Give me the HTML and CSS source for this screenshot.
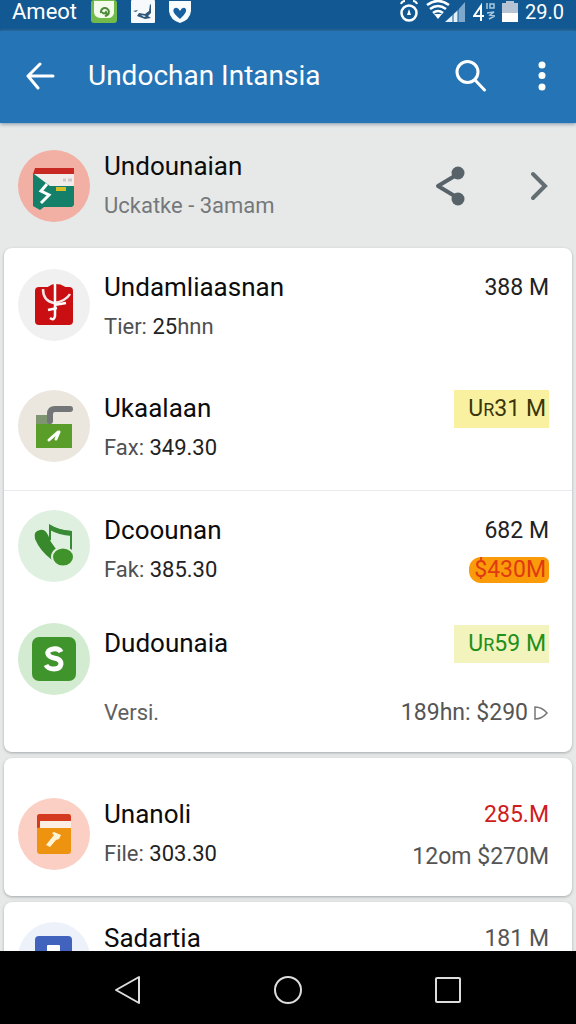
FILE: index.html
```html
<!DOCTYPE html>
<html lang="en">
<head>
<meta charset="utf-8">
<meta name="viewport" content="width=device-width, initial-scale=1">
<title>Undochan Intansia</title>
<link rel="stylesheet" href="styles.css">
</head>
<body>
<div class="status">
  <span class="carrier">Ameot</span>
  <svg width="26" height="24" viewBox="0 0 26 24"><rect width="26" height="23" rx="3" fill="#72bb4b"/><path d="M3 1h20v12q-1 5-6 5H9q-6-1-6-6z" fill="#f4fbea"/><path d="M10 13a4 4 0 1 1 4 3q3-1 1-4-2 3-4 0" fill="none" stroke="#4d8a3a" stroke-width="2"/></svg>
  <svg width="24" height="24" viewBox="0 0 24 24"><rect width="24" height="23" rx="1" fill="#f6fafc"/><path d="M2 11l5-1-2 2zM8 13l6 1 4-3 1-7 1 1v8l-3 3 3 2-6 1-8-3z" fill="#315779"/><path d="M10 15l5 1-2 1z" fill="#fff"/></svg>
  <svg width="22" height="24" viewBox="0 0 22 24"><path d="M0 1h22v10q-1 9-11 12Q1 20 0 11z" fill="#f8fcff"/><path d="M11 19Q1 11 6 8q3-1 5 3 2-4 5-3 4 3-5 11z" fill="#175f9f"/></svg>
  <div class="system">
    <svg width="20" height="24" viewBox="0 0 20 24" fill="none" stroke="#fff"><circle cx="10" cy="13" r="7.500" stroke-width="2.500"/><path d="M2 4q1-3 4-3M18 4q-1-3-4-3" stroke-width="2"/><path d="M10 9l2 6H8z" fill="#fff" stroke="none"/></svg>
    <svg class="signal" width="40" height="24" viewBox="0 0 40 24"><g fill="none" stroke="#fff" stroke-width="2.600"><path d="M1 5q11-8 22 0M4 9q8-6 16 0M7 13q5-4 10 0"/></g><path d="M8 14h8l-4 5z" fill="#fff"/><path d="M19 22l13-12v12z" fill="#e3f0fa"/><path d="M32 10l7-8v20h-7z" fill="#7fa8cd"/><path d="M27 14v8M32 9v13" stroke="#175c99"/></svg>
    <svg width="22" height="24" viewBox="0 0 22 24" fill="none" stroke="#fff"><path d="M8 21V6L1 16h10" stroke-width="2"/><path d="M14 3v6M17 4h4v4h-4zM14 13l7-1-4 3 5 1-6 3" stroke="#a7c7e0" stroke-width="1.500"/></svg>
    <svg width="16" height="24" viewBox="0 0 16 24"><path d="M0 3h4V1h8v2h4v10H0z" fill="#b6c3d5"/><path d="M0 13h16v9H0z" fill="#fff"/></svg>
    <span class="clock">29.0</span>
  </div>
</div>

<header class="appbar">
  <button class="icon-btn" aria-label="Back"><svg width="30" height="30" viewBox="0 0 30 30" fill="none" stroke="#fff" stroke-width="3" stroke-linecap="round" stroke-linejoin="round"><path d="M27 15H2M14 3L2 15l10 12"/></svg></button>
  <h1>Undochan Intansia</h1>
  <button class="icon-btn search" aria-label="Search"><svg width="32" height="32" viewBox="0 0 32 32" fill="none" stroke="#fff" stroke-width="3" stroke-linecap="round"><circle cx="12.500" cy="12" r="10.500"/><path d="M20 20l9.500 10"/></svg></button>
  <button class="icon-btn" aria-label="More"><svg width="8" height="30" viewBox="0 0 8 30" fill="#fff"><circle cx="4" cy="4" r="3.500"/><circle cx="4" cy="14.500" r="3.500"/><circle cx="4" cy="26" r="3.500"/></svg></button>
</header>

<main>
  <section class="profile">
    <svg class="avatar" viewBox="0 0 72 72"><circle cx="36" cy="36" r="36" fill="#f1b0a3"/><path d="M15 24l5-1h36v32l-2 2H26l-4 3-7-4z" fill="#14806a"/><path d="M17 18h39v6H15z" fill="#c82a23"/><path d="M16 24h40v12H32z" fill="#f0ecea"/><path d="M45 30h3M50 30h4" stroke="#cfc6c6" stroke-width="3"/><path d="M38 39h10" stroke="#d9bf27" stroke-width="4"/><path d="M29 34l-6 7 8 4-8 8" fill="none" stroke="#fff" stroke-width="3"/></svg>
    <div class="text">
      <h2 class="name">Undounaian</h2>
      <p class="sub grey">Uckatke - 3amam</p>
    </div>
    <button class="icon-btn share" aria-label="Share"><svg width="32" height="40" viewBox="0 0 32 40" fill="#576269"><path d="M24 8L4 20l20 12" fill="none" stroke="#576269" stroke-width="4" stroke-linejoin="round"/><circle cx="24" cy="7" r="6.500"/><circle cx="24" cy="33" r="6.500"/></svg></button>
    <button class="icon-btn" aria-label="Open"><svg width="18" height="30" viewBox="0 0 18 30" fill="none" stroke="#626e72" stroke-width="4" stroke-linecap="round"><path d="M3 3l12 12L3 27"/></svg></button>
  </section>

  <section class="card">
    <article class="row">
      <svg class="avatar" viewBox="0 0 72 72"><circle cx="36" cy="36" r="36" fill="#f0f0f0"/><rect x="17" y="18" width="38" height="38" rx="4" fill="#c90f12"/><path d="M28 24q1-9 10-9 10 0 12 9l-8 9-10-1z" fill="#c90f12"/><path d="M25 20q0 12 11 14 12-2 16-9" fill="none" stroke="#f4e9e9" stroke-width="2.500"/><path d="M37 15v32q-1 5-5 2M30 41l9-2M36 36l12-2" fill="none" stroke="#fff" stroke-width="2.500"/></svg>
      <div class="text"><h2 class="name">Undamliaasnan</h2><p class="sub">Tier: <span class="dark">25</span>hnn</p></div>
      <div class="amounts"><span class="amount dark">388 M</span></div>
    </article>
    <article class="row">
      <svg class="avatar" viewBox="0 0 72 72"><circle cx="36" cy="36" r="36" fill="#ebe7de"/><path d="M18 25h15v10H18z" fill="#7f9471"/><path d="M18 34h36v24H18z" fill="#5a9d29"/><path d="M32 31V24q0-5 5-5h15" fill="none" stroke="#747577" stroke-width="6" stroke-linecap="round" stroke-linejoin="round"/><path d="M31 50l9-8M41 42l-3 7" fill="none" stroke="#fff" stroke-width="3" stroke-linecap="round"/></svg>
      <div class="text"><h2 class="name">Ukaalaan</h2><p class="sub">Fax: <span class="dark">349.30</span></p></div>
      <div class="amounts"><span class="tag">U<span class="cap">R</span>31 M</span></div>
    </article>
    <hr>
    <article class="row short">
      <svg class="avatar" viewBox="0 0 72 72"><circle cx="36" cy="36" r="36" fill="#dff0e1"/><path d="M32 30V16q8 5 21 6v20" fill="none" stroke="#398a34" stroke-width="2"/><path d="M31 14q9 6 23 7v5q-14-1-22-6z" fill="#398a34"/><path d="M17 29q-2-8 5-9 5-1 8 5l3 7 5 7q-4 4-4 11-12-9-17-21z" fill="#38892b"/><ellipse cx="45" cy="47" rx="11" ry="9.500" fill="#40922b" stroke="#dff0e1" stroke-width="2"/></svg>
      <div class="text"><h2 class="name">Dcoounan</h2><p class="sub">Fak: <span class="dark">385.30</span></p></div>
      <div class="amounts"><span class="amount dark">682 M</span><span class="pill">$430M</span></div>
    </article>
    <article class="row service">
      <svg class="avatar" viewBox="0 0 72 72"><circle cx="36" cy="36" r="36" fill="#d3ebd0"/><rect x="14" y="14" width="44" height="44" rx="7" fill="#3f942c"/><path d="M43 29q-2-4-8-3-6 1-5 5 1 3 6 4 7 1 7 6-1 5-7 5-6 0-8-4" fill="none" stroke="#fff" stroke-width="5"/></svg>
      <div class="text"><h2 class="name">Dudounaia</h2></div>
      <div class="amounts"><span class="tag green">U<span class="cap">R</span>59 M</span></div>
    </article>
    <div class="version">
      <span>Versi.</span>
      <span class="amount">189hn: $290 <svg width="16" height="16" viewBox="0 0 16 16" fill="none" stroke="#777" stroke-width="1.500"><path d="M2 2q7 0 12 6-5 6-12 6z"/></svg></span>
    </div>
  </section>

  <section class="card file">
    <article class="row">
      <svg class="avatar" viewBox="0 0 72 72"><circle cx="36" cy="36" r="36" fill="#fbcfc3"/><rect x="19" y="16" width="34" height="40" rx="3" fill="#ee930f"/><path d="M19 30V19q0-3 3-3h28q3 0 3 3v5z" fill="#d33a20"/><path d="M22 23h31v7H22z" fill="#fdeee4"/><path d="M28 47l8-10-2-2 2-1 7 3-2 4-3 1-6 7z" fill="#fff3d5"/></svg>
      <div class="text"><h2 class="name">Unanoli</h2><p class="sub">File: <span class="dark">303.30</span></p></div>
      <div class="amounts"><span class="amount red">285.M</span><span class="amount">12om $270M</span></div>
    </article>
  </section>

  <section class="card last">
    <article class="row">
      <svg class="avatar" viewBox="0 0 72 72"><circle cx="36" cy="36" r="36" fill="#edf2fa"/><rect x="17" y="14" width="37" height="42" rx="4" fill="#4263bd"/><rect x="29" y="23" width="13" height="16" rx="1" fill="#fff"/></svg>
      <div class="text"><h2 class="name">Sadartia</h2></div>
      <div class="amounts"><span class="amount">181 M</span></div>
    </article>
  </section>
</main>

<nav class="navbar">
  <button class="icon-btn" aria-label="Navigate back"><svg width="28" height="32" viewBox="0 0 28 32" fill="none" stroke="#ddd" stroke-width="2" stroke-linejoin="round"><path d="M25 3v26L2 16z"/></svg></button>
  <button class="icon-btn" aria-label="Home"><svg width="30" height="30" viewBox="0 0 30 30" fill="none" stroke="#ddd" stroke-width="2"><circle cx="15" cy="15" r="13"/></svg></button>
  <button class="icon-btn" aria-label="Recent apps"><svg width="28" height="28" viewBox="0 0 28 28" fill="none" stroke="#ddd" stroke-width="2"><rect x="2" y="2" width="24" height="24" rx="1"/></svg></button>
</nav>
</body>
</html>
```
FILE: styles.css
```css
* { box-sizing: border-box; }
body {
  margin: 0;
  height: 100vh;
  display: flex;
  flex-direction: column;
  overflow: hidden;
  background: #e7e9e9;
  color: #111;
  font-family: Roboto, "Liberation Sans", sans-serif;
}
h1, h2, p { margin: 0; font-weight: 400; }
svg { display: block; flex: none; }
.icon-btn {
  display: flex;
  padding: 0;
  border: 0;
  background: none;
}

.status {
  flex: none;
  display: flex;
  align-items: center;
  gap: 14px;
  padding: 0 12px 7px;
  height: 31px;
  background: #125993;
  color: #fff;
  font-size: 22px;
  line-height: 24px;
}
.system {
  display: flex;
  align-items: center;
  gap: 7px;
  margin-left: auto;
}
.clock { font-size: 20px; }

.appbar {
  flex: none;
  display: flex;
  align-items: center;
  height: 92px;
  padding: 0 30px 2px 26px;
  position: relative;
  background: #2574b5;
  color: #fff;
  box-shadow: 0 1px 4px #7c8fa2;
}
.appbar h1 {
  flex: 1;
  margin-left: 32px;
  font-size: 28px;
  line-height: 40px;
}
.search { margin-right: 51px; }

main {
  flex: 1;
  min-height: 0;
  overflow: hidden;
}
.avatar { width: 72px; height: 72px; flex: none; }
.text { flex: 1; min-width: 0; }
.name { font-size: 26px; line-height: 40px; color: #0c0c0c; }
.sub { font-size: 22px; line-height: 40px; color: #505050; }
.grey { color: #75787a; }
.dark { color: #222; }

.profile {
  display: flex;
  align-items: center;
  gap: 14px;
  height: 125px;
  padding: 0 28px 0 18px;
}
.share { margin-right: 50px; }

.card {
  margin: 0 4px 6px;
  border-radius: 8px;
  background: #fff;
  box-shadow: 0 1px 3px #a3a7a9;
}
.card hr {
  height: 1px;
  margin: 0;
  border: 0;
  background: #e8ecee;
}
.row {
  display: flex;
  align-items: flex-start;
  gap: 14px;
  min-height: 121px;
  padding: 19px 23px 0 14px;
}
.row .avatar { margin-top: 2px; }
.short { min-height: 114px; }
.service { min-height: 90px; padding-top: 18px; }
.short .avatar, .service .avatar { margin-top: 0; }
.amounts {
  display: flex;
  flex-direction: column;
  align-items: flex-end;
}
.amount {
  font-size: 23px;
  line-height: 42px;
  color: #555;
  white-space: nowrap;
}
.amount.dark { color: #222; }
.amount.red { color: #cf1c1c; }
.tag {
  margin-top: 2px;
  padding: 0 3px 0 14px;
  background: #faf1a0;
  color: #3a360c;
  font-size: 23px;
  line-height: 37px;
  white-space: nowrap;
}
.tag.green { background: #f3f3bd; color: #20901a; }
.cap { font-size: 18px; }
.pill {
  margin-top: 5px;
  padding: 0 3px 0 5px;
  border-radius: 12px 6px 6px 12px;
  background: #fa9b0a;
  color: #e03a12;
  font-size: 23px;
  line-height: 26px;
}
.version {
  display: flex;
  justify-content: space-between;
  padding: 0 23px 21px 100px;
  color: #606060;
  font-size: 22px;
  line-height: 36px;
}
.version .amount {
  display: flex;
  align-items: center;
  gap: 5px;
  line-height: 36px;
}
.file .row { min-height: 138px; padding-top: 36px; }
.last .row { padding-top: 16px; }
.file .avatar, .last .avatar { margin-top: 4px; }

.navbar {
  flex: none;
  display: flex;
  align-items: center;
  justify-content: center;
  gap: 131px;
  height: 73px;
  padding-top: 5px;
  position: relative;
  background: #000;
}
```
